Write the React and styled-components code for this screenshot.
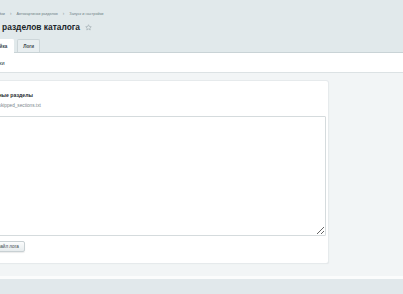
import React from 'react';
import styled, { createGlobalStyle } from 'styled-components';

const GlobalStyle = createGlobalStyle`
  html, body {
    margin: 0;
    padding: 0;
    overflow: hidden;
    background: #f2f5f6;
  }
  body {
    font-family: 'Liberation Sans', Arial, sans-serif;
  }
`;

const Viewport = styled.div`
  width: 403px;
  height: 294px;
  overflow: hidden;
  background: #f2f5f6;
`;

// the screenshot is scrolled sideways, so the page starts left of the window
const Page = styled.div`
  margin-left: -62px;
  width: 465px;
  display: flex;
  flex-direction: column;
`;

const Header = styled.header`
  background: #e1e9eb;
  border-bottom: 1px solid #c9d3d6;
  padding-top: 11px;
  height: 41px;
  display: flex;
  flex-direction: column;
`;

const Breadcrumbs = styled.nav`
  display: flex;
  align-items: center;
  gap: 5px;
  height: 6px;
  font-size: 3.8px;
  line-height: 6px;
  color: #6f7f86;
  padding-left: 13px;
`;

const Crumb = styled.span`
  white-space: nowrap;
`;

const Sep = styled.span`
  font-size: 4.5px;
  color: #8a979c;
`;

const TitleRow = styled.div`
  display: flex;
  align-items: center;
  gap: 5px;
  margin-top: 5px;
  height: 10px;
  padding-left: 4px;
`;

const Title = styled.h1`
  margin: 0;
  font-size: 8.4px;
  line-height: 10px;
  font-weight: 700;
  color: #1b2529;
  white-space: nowrap;
`;

const Tabs = styled.div`
  display: flex;
  align-items: flex-end;
  gap: 3px;
  margin-top: auto;
  height: 14px;
  padding-left: 18px;
`;

const Tab = styled.div`
  height: ${p => (p.$active ? '14px' : '13px')};
  padding: 0 ${p => (p.$active ? '6px' : '5px')};
  display: flex;
  align-items: center;
  font-size: 4.6px;
  font-weight: 700;
  color: #3a464b;
  white-space: nowrap;
  border-radius: 2px 2px 0 0;
  background: ${p => (p.$active ? '#ffffff' : '#e8eef0')};
  border: 1px solid ${p => (p.$active ? '#ffffff' : '#cdd6d9')};
  border-bottom: none;
  box-sizing: border-box;
  margin-bottom: ${p => (p.$active ? '-1px' : '0')};
`;

const Band = styled.div`
  height: 19px;
  background: #ffffff;
  border-bottom: 1px solid #dce2e4;
  display: flex;
  align-items: center;
  font-size: 5.6px;
  color: #2a3438;
  padding-left: 12px;
`;

const Body = styled.div`
  display: flex;
  padding: 8px 0 0 20px;
  height: 182px;
`;

const Card = styled.section`
  width: 370px;
  height: 182px;
  box-sizing: border-box;
  background: #ffffff;
  border-radius: 2px;
  box-shadow: 0 0 0 1px #e6eaec, 1px 1px 1px #dfe5e7;
  padding: 10px 2px 0 14px;
  display: flex;
  flex-direction: column;
`;

const CardTitle = styled.h2`
  margin: 0;
  font-size: 5.2px;
  line-height: 8px;
  font-weight: 700;
  color: #1f2a2e;
  white-space: nowrap;
`;

const FileHint = styled.div`
  margin-top: 4px;
  font-size: 4.7px;
  line-height: 6px;
  color: #7a868b;
  white-space: nowrap;
`;

const LogArea = styled.textarea`
  margin-top: 7px;
  height: 120px;
  box-sizing: border-box;
  border: 1px solid #d5dbdd;
  border-radius: 1px;
  background: #ffffff;
  resize: vertical;
  width: 100%;
  outline: none;
`;

const Actions = styled.div`
  display: flex;
  gap: 4px;
  margin-top: 5px;
`;

const Button = styled.button`
  height: 11px;
  padding: 0 5px;
  font-family: inherit;
  font-size: 4.6px;
  color: #3a464b;
  border: 1px solid #c8d0d3;
  border-radius: 2px;
  background: linear-gradient(#fbfcfc, #e7ecee);
  box-shadow: 0 1px 1px rgba(0, 0, 0, 0.08);
  white-space: nowrap;
`;

const Footer = styled.div`
  margin-top: 13px;
  border-top: 3px solid #fbfcfc;
  height: 20px;
  background: #e1e8eb;
`;

const Star = () => (
  <svg width="7" height="7" viewBox="0 0 24 24" fill="none" stroke="#9aa6ab" strokeWidth="2">
    <path d="M12 2.5l2.9 6.2 6.6.7-4.9 4.5 1.4 6.6L12 17.2 6 20.5l1.4-6.6-4.9-4.5 6.6-.7z" />
  </svg>
);

export default function App() {
  return (
    <Viewport>
      <GlobalStyle />
      <Page>
        <Header>
          <Breadcrumbs>
            <Crumb>Рабочий стол</Crumb>
            <Sep>›</Sep>
            <Crumb>Настройки</Crumb>
            <Sep>›</Sep>
            <Crumb>Автокартинки разделов</Crumb>
            <Sep>›</Sep>
            <Crumb>Запуск и настройки</Crumb>
          </Breadcrumbs>
          <TitleRow>
            <Title>Автокартинки разделов каталога</Title>
            <Star />
          </TitleRow>
          <Tabs>
            <Tab $active>Запуск и настройка</Tab>
            <Tab>Логи</Tab>
          </Tabs>
        </Header>
        <Band>Основные настройки</Band>
        <Body>
          <Card>
            <CardTitle>Пропущенные разделы</CardTitle>
            <FileHint>/upload/logs/skipped_sections.txt</FileHint>
            <LogArea readOnly />
            <Actions>
              <Button>Скачать файл лога</Button>
            </Actions>
          </Card>
        </Body>
        <Footer />
      </Page>
    </Viewport>
  );
}
